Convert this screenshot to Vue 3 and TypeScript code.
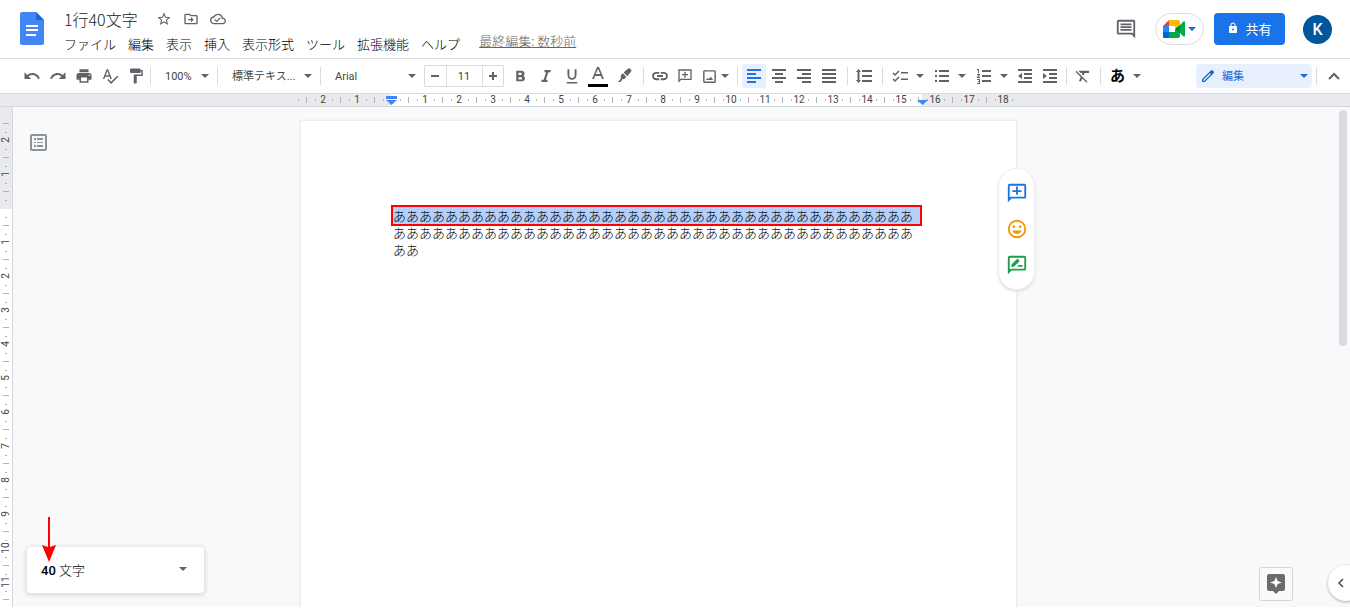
<script setup lang="ts">
import { ref } from 'vue'

interface Mark {
  pos: number
  kind: 'label' | 'tick' | 'dot'
  text: string
}

const CM = 34

function buildMarks(from: number, to: number): Mark[] {
  const marks: Mark[] = []
  for (let q = from; q <= to; q++) {
    const pos = Math.round((q * CM) / 4)
    if (q % 4 === 0) {
      if (q !== 0) marks.push({ pos, kind: 'label', text: String(Math.abs(q / 4)) })
    } else {
      marks.push({ pos, kind: q % 2 === 0 ? 'tick' : 'dot', text: '' })
    }
  }
  return marks
}

const rulerX = buildMarks(-11, 73)
const rulerY = buildMarks(-10, 46)

const menus = ['ファイル', '編集', '表示', '挿入', '表示形式', 'ツール', '拡張機能', 'ヘルプ']
const title = ref('1行40文字')
const fontSize = ref('11')
const row = 'あ'.repeat(40)
const tail = 'ああ'

const alignLines = [
  { name: '左揃え', active: true, d: 'M1 1h14v2H1zM1 5h9v2H1zM1 9h14v2H1zM1 13h9v2H1z' },
  { name: '中央揃え', active: false, d: 'M1 1h14v2H1zM4 5h8v2H4zM1 9h14v2H1zM4 13h8v2H4z' },
  { name: '右揃え', active: false, d: 'M1 1h14v2H1zM6 5h9v2H6zM1 9h14v2H1zM6 13h9v2H6z' },
  { name: '両端揃え', active: false, d: 'M1 1h14v2H1zM1 5h14v2H1zM1 9h14v2H1zM1 13h14v2H1z' },
]
</script>

<template>
  <div class="app">
    <header class="header">
      <a class="logo" href="#" aria-label="ドキュメント ホーム">
        <svg width="24" height="33" viewBox="0 0 24 33">
          <path d="M2 0h14l8 8v23a2 2 0 0 1-2 2H2a2 2 0 0 1-2-2V2a2 2 0 0 1 2-2z" fill="#4285f4" />
          <path d="M16 0l8 8h-8z" fill="#1967d2" />
          <path d="M6 13h12v2H6zM6 17h12v2H6zM6 22h10v2H6z" fill="#fff" />
        </svg>
      </a>
      <div class="heading">
        <div class="title-row">
          <h1 class="title">{{ title }}</h1>
          <button class="mini" aria-label="スター">
            <svg width="16" height="16" viewBox="0 0 24 24"><path d="M22 9.24l-7.19-.62L12 2 9.19 8.63 2 9.24l5.46 4.73L5.82 21 12 17.27 18.18 21l-1.63-7.03L22 9.24zM12 15.4l-3.76 2.27 1-4.28-3.32-2.88 4.38-.38L12 6.1l1.71 4.04 4.38.38-3.32 2.88 1 4.28L12 15.4z" /></svg>
          </button>
          <button class="mini" aria-label="移動">
            <svg width="16" height="16" viewBox="0 0 24 24"><path d="M20 6h-8l-2-2H4c-1.100 0-2 .9-2 2v12c0 1.100.9 2 2 2h16c1.100 0 2-.9 2-2V8c0-1.100-.9-2-2-2zm0 12H4V6h5.200l2 2H20v10zM12 14v3l4-4-4-4v3H8v2z" /></svg>
          </button>
          <button class="mini" aria-label="ドキュメントのステータス">
            <svg width="16" height="16" viewBox="0 0 24 24"><path d="M19.350 10.040A7.490 7.490 0 0 0 12 4C9.110 4 6.600 5.640 5.350 8.040A5.994 5.994 0 0 0 0 14c0 3.310 2.690 6 6 6h13c2.760 0 5-2.240 5-5 0-2.640-2.050-4.780-4.650-4.960zM19 18H6c-2.210 0-4-1.790-4-4 0-2.050 1.530-3.760 3.560-3.970l1.070-.11.5-.95A5.469 5.469 0 0 1 12 6c2.620 0 4.880 1.860 5.390 4.430l.3 1.500 1.530.11A2.980 2.980 0 0 1 22 15c0 1.650-1.350 3-3 3zm-9-3.820l-2.090-2.090L6.500 13.500 10 17l6.010-6.010-1.410-1.410z" /></svg>
          </button>
        </div>
        <nav class="menus">
          <button v-for="m in menus" :key="m" class="menu">{{ m }}</button>
          <a class="last-edit" href="#">最終編集: 数秒前</a>
        </nav>
      </div>
      <div class="actions">
        <button class="comments" aria-label="コメント履歴を開く">
          <svg width="22" height="22" viewBox="0 0 24 24"><path d="M21.990 4c0-1.100-.89-2-1.990-2H4c-1.100 0-2 .9-2 2v12c0 1.100.9 2 2 2h14l4 4-.01-18zM20 4v13.170L18.830 16H4V4h16zM6 12h12v2H6zm0-3h12v2H6zm0-3h12v2H6z" /></svg>
        </button>
        <button class="meet" aria-label="Meet">
          <svg width="22" height="18" viewBox="0 0 22 18">
            <path d="M6 0v6H0z" fill="#ea4335" />
            <path d="M0 6h6v6H0z" fill="#2684fc" />
            <path d="M0 12h6v6H1a1 1 0 0 1-1-1z" fill="#0066da" />
            <path d="M6 0h9a2 2 0 0 1 2 2v7l-5-1V6H6z" fill="#ffba00" />
            <path d="M6 12h6V9h5v7a2 2 0 0 1-2 2H6z" fill="#00ac47" />
            <path d="M17 5l3-3c1-1 2-1 2 1v12c0 2-1 2-2 1l-3-3z" fill="#00ac47" />
            <path d="M12 9l5-4v8z" fill="#00832d" />
          </svg>
          <svg class="caret blue" width="8" height="4" viewBox="0 0 8 4"><path d="M0 0h8L4 4z" /></svg>
        </button>
        <button class="share">
          <svg width="12" height="12" viewBox="0 0 24 24"><path d="M18 8h-1V6c0-2.760-2.240-5-5-5S7 3.240 7 6v2H6c-1.100 0-2 .9-2 2v10c0 1.100.9 2 2 2h12c1.100 0 2-.9 2-2V10c0-1.100-.9-2-2-2zm-6 9a2 2 0 1 1 0-4 2 2 0 0 1 0 4zM9 8V6a3 3 0 0 1 6 0v2z" fill="#fff" /></svg>
          共有
        </button>
        <button class="avatar" aria-label="アカウント K">K</button>
      </div>
    </header>

    <div class="toolbar" role="toolbar" aria-label="ツールバー">
      <div class="group g-history">
        <button class="tb" aria-label="元に戻す"><svg width="18" height="18" viewBox="0 0 24 24"><path d="M12.500 8c-2.650 0-5.050.99-6.900 2.600L2 7v9h9l-3.620-3.620c1.390-1.160 3.160-1.880 5.120-1.880 3.540 0 6.550 2.310 7.600 5.500l2.370-.78C21.080 11.030 17.150 8 12.500 8z" /></svg></button>
        <button class="tb" aria-label="やり直し"><svg width="18" height="18" viewBox="0 0 24 24"><path d="M18.400 10.600C16.550 8.990 14.150 8 11.500 8c-4.650 0-8.580 3.030-9.960 7.220L3.900 16c1.050-3.190 4.050-5.500 7.600-5.500 1.950 0 3.730.72 5.120 1.880L13 16h9V7l-3.600 3.600z" /></svg></button>
        <button class="tb" aria-label="印刷"><svg width="18" height="18" viewBox="0 0 24 24"><path d="M19 8H5c-1.660 0-3 1.340-3 3v6h4v4h12v-4h4v-6c0-1.660-1.340-3-3-3zm-3 11H8v-5h8v5zm3-7c-.55 0-1-.45-1-1s.45-1 1-1 1 .45 1 1-.45 1-1 1zm-1-9H6v4h12V3z" /></svg></button>
        <button class="tb" aria-label="スペルと文法のチェック"><svg width="18" height="18" viewBox="0 0 24 24"><path d="M12.450 16h2.090L9.430 3H7.570L2.460 16h2.090l1.120-3h5.640l1.140 3zm-6.020-5L8.500 5.480 10.570 11H6.430zm15.160.59l-8.090 8.090L9.830 16l-1.410 1.410 5.090 5.090L23 13l-1.410-1.410z" /></svg></button>
        <button class="tb" aria-label="書式の貼り付け"><svg width="18" height="18" viewBox="0 0 24 24"><path d="M18 4V3c0-.55-.45-1-1-1H5c-.55 0-1 .45-1 1v4c0 .55.45 1 1 1h12c.55 0 1-.45 1-1V6h1v4H9v11c0 .55.45 1 1 1h2c.55 0 1-.45 1-1v-9h8V4h-3z" /></svg></button>
      </div>
      <span class="sep"></span>
      <label class="pick w-zoom">
        <select aria-label="ズーム"><option>100%</option><option>90%</option></select>
        <svg class="caret" width="8" height="4" viewBox="0 0 8 4"><path d="M0 0h8L4 4z" /></svg>
      </label>
      <span class="sep"></span>
      <label class="pick w-style">
        <select aria-label="スタイル"><option>標準テキス...</option></select>
        <svg class="caret" width="8" height="4" viewBox="0 0 8 4"><path d="M0 0h8L4 4z" /></svg>
      </label>
      <span class="sep"></span>
      <label class="pick w-font">
        <select aria-label="フォント"><option>Arial</option></select>
        <svg class="caret" width="8" height="4" viewBox="0 0 8 4"><path d="M0 0h8L4 4z" /></svg>
      </label>
      <div class="stepper">
        <button aria-label="フォントサイズを縮小"><svg width="10" height="10" viewBox="0 0 10 10"><path d="M1 4h8v2H1z" /></svg></button>
        <input v-model="fontSize" type="text" aria-label="フォントサイズ" />
        <button aria-label="フォントサイズを拡大"><svg width="10" height="10" viewBox="0 0 10 10"><path d="M1 4h3V1h2v3h3v2H6v3H4V6H1z" /></svg></button>
      </div>
      <div class="group g-text">
        <button class="tb" aria-label="太字"><svg width="18" height="18" viewBox="0 0 24 24"><path d="M16.400 11.790c.97-.67 1.650-1.770 1.650-2.790 0-2.260-1.750-4-4-4H7v14h7.840c2.090 0 3.710-1.700 3.710-3.790 0-1.520-.86-2.820-2.150-3.420zM10 7.500h3a1.500 1.500 0 0 1 0 3h-3v-3zm3.500 9H10v-3h3.500a1.500 1.500 0 0 1 0 3z" /></svg></button>
        <button class="tb" aria-label="斜体"><svg width="18" height="18" viewBox="0 0 24 24"><path d="M10 4v3h2.210l-3.420 10H6v3h8v-3h-2.210l3.420-10H18V4z" /></svg></button>
        <button class="tb" aria-label="下線"><svg width="18" height="18" viewBox="0 0 24 24"><path d="M12 17c3.310 0 6-2.690 6-6V3h-2.500v8a3.500 3.500 0 0 1-7 0V3H6v8c0 3.310 2.690 6 6 6zm-7 3v2h14v-2H5z" /></svg></button>
        <button class="tb color" aria-label="テキストの色"><svg width="20" height="22" viewBox="0 0 20 22"><path d="M9 2h2l5 12h-2l-1-3H7l-1 3H4zM7.600 9h4.800L10 3.900z" /><path d="M0 19h20v3H0z" fill="#000" /></svg></button>
        <button class="tb" aria-label="ハイライトの色"><svg width="16" height="16" viewBox="0 0 16 16"><path d="M11.500 1l1-.6a1.500 1.500 0 0 1 1.500.3l1 1a1.500 1.500 0 0 1 .2 1.800L11.300 8.200 7.600 4.500zM6.800 5.300l3.600 3.600-2.300 2.300-1.500-.2L4.500 14H2l2.800-3.300V7.300z" /></svg></button>
      </div>
      <span class="sep"></span>
      <div class="group tight g-insert">
        <button class="tb" aria-label="リンクを挿入"><svg width="18" height="18" viewBox="0 0 24 24"><path d="M3.900 12c0-1.710 1.390-3.100 3.100-3.100h4V6.500H7a5.500 5.500 0 0 0 0 11h4v-2.400H7A3.100 3.100 0 0 1 3.900 12zM8 13.200h8v-2.400H8v2.400zm9-6.700h-4v2.400h4a3.100 3.100 0 0 1 0 6.200h-4v2.400h4a5.500 5.500 0 0 0 0-11z" /></svg></button>
        <button class="tb" aria-label="コメントを追加"><svg width="16" height="16" viewBox="0 0 24 24"><path d="M22 2H2v20l4-4h16V2zm-2 14H5.200L4 17.200V4h16v12zM11 14.500h2v-3.500h3.500V9H13V5.500h-2V9H7.500v2H11z" /></svg></button>
        <button class="tb split" aria-label="画像を挿入"><svg width="17" height="17" viewBox="0 0 24 24"><path d="M19 5v14H5V5h14m0-2H5c-1.100 0-2 .9-2 2v14c0 1.100.9 2 2 2h14c1.100 0 2-.9 2-2V5c0-1.100-.9-2-2-2zM7 17l2.500-3 1.500 1.500 3-3 3 4.500z" /></svg><svg class="caret" width="8" height="4" viewBox="0 0 8 4"><path d="M0 0h8L4 4z" /></svg></button>
      </div>
      <span class="sep"></span>
      <div class="group tight g-align">
        <button v-for="a in alignLines" :key="a.name" class="tb" :class="{ active: a.active }" :aria-label="a.name" :aria-pressed="a.active"><svg width="16" height="16" viewBox="0 0 16 16"><path :d="a.d" /></svg></button>
      </div>
      <span class="sep"></span>
      <div class="group g-spacing">
        <button class="tb" aria-label="行間隔"><svg width="18" height="18" viewBox="0 0 18 18"><path d="M7 3h10v2H7zM7 8h10v2H7zM7 13h10v2H7zM3.500 2L6 5H4.500v8H6l-2.500 3L1 13h1.500V5H1z" /></svg></button>
      </div>
      <span class="sep"></span>
      <div class="group tight g-lists">
        <button class="tb wide" aria-label="チェックリスト"><svg width="16" height="16" viewBox="0 0 16 16"><path d="M9 4h7v1.500H9zM9 10.500h7V12H9z" /><path d="M1 5l2 2 4-4M1 11l2 2 4-4" fill="none" stroke="#5f6368" stroke-width="1.500" /></svg><svg class="caret" width="8" height="4" viewBox="0 0 8 4"><path d="M0 0h8L4 4z" /></svg></button>
        <button class="tb wide" aria-label="箇条書き"><svg width="16" height="16" viewBox="0 0 16 16"><path d="M5 2h10v2H5zM5 7h10v2H5zM5 12h10v2H5zM1 2h2v2H1zM1 7h2v2H1zM1 12h2v2H1z" /></svg><svg class="caret" width="8" height="4" viewBox="0 0 8 4"><path d="M0 0h8L4 4z" /></svg></button>
        <button class="tb wide" aria-label="番号付きリスト"><svg width="16" height="16" viewBox="0 0 16 16"><path d="M6 2h9v2H6zM6 7h9v2H6zM6 12h9v2H6zM1 1h2v4H2V2H1zM1 6h3v1L2.500 9H4v1H1V9l1.500-2H1zM1 11h3v5H1v-1h2v-1H2v-1h1v-1H1z" /></svg><svg class="caret" width="8" height="4" viewBox="0 0 8 4"><path d="M0 0h8L4 4z" /></svg></button>
        <button class="tb" aria-label="インデント減"><svg width="16" height="16" viewBox="0 0 16 16"><path d="M1 1h14v2H1zM7 5h8v2H7zM7 9h8v2H7zM1 13h14v2H1zM5 5v6L1 8z" /></svg></button>
        <button class="tb" aria-label="インデント増"><svg width="16" height="16" viewBox="0 0 16 16"><path d="M1 1h14v2H1zM7 5h8v2H7zM7 9h8v2H7zM1 13h14v2H1zM1 5v6l4-3z" /></svg></button>
      </div>
      <span class="sep"></span>
      <div class="group g-clear">
        <button class="tb" aria-label="書式をクリア"><svg width="18" height="18" viewBox="0 0 24 24"><path d="M3.270 5L2 6.270l6.970 6.970L6.500 19h3l1.570-3.660L16.730 21 18 19.730 3.550 5.270 3.270 5zM6 5v.18L8.820 8h2.400l-.72 1.680 2.100 2.100L14.210 8H20V5H6z" /></svg></button>
      </div>
      <span class="sep"></span>
      <div class="group g-ime">
        <button class="tb wide ime" aria-label="入力ツール">あ<svg class="caret" width="8" height="4" viewBox="0 0 8 4"><path d="M0 0h8L4 4z" /></svg></button>
      </div>
      <label class="mode pick">
        <svg class="pencil" width="16" height="16" viewBox="0 0 24 24"><path d="M20.410 4.940l-1.350-1.350a2 2 0 0 0-2.830 0L3 16.820V21h4.180L20.410 7.770a2 2 0 0 0 0-2.830zM6.410 19.060L5 19v-1.360l9.820-9.820 1.410 1.410-9.820 9.830z" /></svg>
        <select aria-label="モード"><option>編集</option><option>閲覧</option></select>
        <svg class="caret blue" width="8" height="4" viewBox="0 0 8 4"><path d="M0 0h8L4 4z" /></svg>
      </label>
      <span class="sep"></span>
      <button class="tb collapse" aria-label="メニューを非表示"><svg width="12" height="8" viewBox="0 0 12 8"><path d="M1 7l5-5 5 5" fill="none" stroke="#5f6368" stroke-width="2" /></svg></button>
    </div>

    <div class="ruler-x">
      <svg class="ruler-scale" width="715" height="12" viewBox="-90 0 715 12">
        <path d="M0 0h531v12H0z" fill="#fff" />
        <template v-for="m in rulerX" :key="m.pos">
          <text v-if="m.kind === 'label'" :x="m.pos" y="9">{{ m.text }}</text>
          <rect v-else :x="m.pos" :y="m.kind === 'tick' ? 3 : 5" width="1" :height="m.kind === 'tick' ? 6 : 2" />
        </template>
        <path d="M-5 2H6v3H-5zM-5 6H6L0.500 11zM526 6h11l-5.500 5z" fill="#4285f4" />
      </svg>
    </div>

    <main class="workspace">
      <svg class="ruler-y" width="12" height="100%">
        <path d="M0 0h12v102H0z" fill="#e8eaed" />
        <g transform="translate(0 101)">
          <template v-for="m in rulerY" :key="m.pos">
            <text v-if="m.kind === 'label'" :transform="`translate(9 ${m.pos}) rotate(-90)`">{{ m.text }}</text>
            <rect v-else :x="m.kind === 'tick' ? 3 : 5" :y="m.pos" :width="m.kind === 'tick' ? 6 : 2" height="1" />
          </template>
        </g>
      </svg>

      <div class="canvas">
        <article class="page">
          <p class="line selected">{{ row }}</p>
          <p class="line">{{ row }}</p>
          <p class="line">{{ tail }}</p>
          <aside class="side">
            <button aria-label="コメントを追加"><svg width="22" height="22" viewBox="0 0 24 24"><path d="M22 4a2 2 0 0 0-2-2H4a2 2 0 0 0-2 2v18l4-4h14a2 2 0 0 0 2-2zM20 16H5l-1 1V4h16zM11 14h2v-3h4V9h-4V5h-2v4H7v2h4z" fill="#1a73e8" /></svg></button>
            <button aria-label="絵文字リアクションを追加"><svg width="22" height="22" viewBox="0 0 24 24"><circle cx="12" cy="12" r="9" fill="none" stroke="#f29900" stroke-width="2" /><circle cx="8.500" cy="9.500" r="1.500" fill="#f29900" /><circle cx="15.500" cy="9.500" r="1.500" fill="#f29900" /><path d="M7 13.500h10a5.200 5.200 0 0 1-10 0z" fill="#f29900" /></svg></button>
            <button aria-label="編集を提案"><svg width="22" height="22" viewBox="0 0 24 24"><path d="M22 4a2 2 0 0 0-2-2H4a2 2 0 0 0-2 2v18l4-4h14a2 2 0 0 0 2-2zM20 16H5l-1 1V4h16zM6 14v-2.500l6.500-6.500L15 7.500 8.500 14zM12 14l2-2h4v2z" fill="#1e9b4b" /></svg></button>
          </aside>
        </article>
      </div>

      <button class="outline" aria-label="ドキュメントの概要を表示">
        <svg width="17" height="17" viewBox="0 0 17 17"><rect x="1" y="1" width="15" height="15" rx="1" fill="none" stroke="#909396" stroke-width="2" /><path d="M4 4h2v2H4zM7 4h6v2H7zM4 8h2v1H4zM7 8h6v1H7zM4 11h2v2H4zM7 11h6v2H7z" fill="#909396" /></svg>
      </button>
      <div class="scrollbar"></div>

      <button class="word-count">
        <span><b>40</b> 文字</span>
        <svg class="caret" width="8" height="4" viewBox="0 0 8 4"><path d="M0 0h8L4 4z" /></svg>
      </button>
      <svg class="arrow" width="14" height="45" viewBox="0 0 14 45"><path d="M6 0h2v30l6-2-7 17L0 28l6 2z" fill="#f00" /></svg>

      <button class="explore" aria-label="データ探索"><svg width="18" height="20" viewBox="0 0 18 20"><path d="M2 0h14a2 2 0 0 1 2 2v13a2 2 0 0 1-2 2h-4l-3 3-3-3H2a2 2 0 0 1-2-2V2a2 2 0 0 1 2-2z" fill="#6b6b6b" /><path d="M9 3l1.600 4L15 8.500 10.600 10 9 14l-1.600-4L3 8.500 7.400 7z" fill="#fff" /></svg></button>
      <button class="panel-toggle" aria-label="サイドパネルを表示"><svg width="6" height="10" viewBox="0 0 6 10"><path d="M5 1L1 5l4 4" fill="none" stroke="#444746" stroke-width="1.500" /></svg></button>
    </main>
  </div>
</template>

<style>
body {
  margin: 0;
}
</style>

<style scoped>
.app {
  display: flex;
  flex-direction: column;
  height: 100vh;
  min-width: 0;
  overflow: hidden;
  background: #fff;
  color: #202124;
  font-family: Roboto, "Noto Sans CJK JP", sans-serif;
  font-size: 13px;
  box-sizing: border-box;
  border-bottom: 1px solid #fff;
}
button,
select,
input {
  font: inherit;
  color: inherit;
  background: none;
  border: 0;
  padding: 0;
  margin: 0;
  box-sizing: border-box;
}
svg {
  display: block;
  flex: none;
  fill: #5f6368;
}
.caret.blue {
  fill: #1967d2;
}

.header {
  flex: none;
  display: flex;
  height: 58px;
  border-bottom: 1px solid #dadce0;
  font-family: "Noto Sans CJK JP", sans-serif;
  font-weight: 300;
}
.logo {
  padding: 12px 14px 0 20px;
}
.heading {
  flex: 1;
  min-width: 0;
  padding-top: 7px;
}
.title-row {
  display: flex;
  align-items: center;
  height: 24px;
  padding-left: 6px;
  gap: 11px;
}
.title {
  margin: 0 7px 0 0;
  font-size: 16px;
  line-height: 24px;
  font-weight: 300;
}
.menus {
  display: flex;
  align-items: center;
  height: 26px;
  line-height: 20px;
}
.menu {
  padding: 0 6px;
  color: #000;
  white-space: nowrap;
}
.last-edit {
  margin-left: 13px;
  padding-bottom: 6px;
  color: #666;
  white-space: nowrap;
}
.actions {
  display: flex;
  align-items: center;
  padding: 0 18px 0 0;
}
.comments {
  margin-right: 18px;
}
.meet {
  display: flex;
  align-items: center;
  gap: 3px;
  height: 32px;
  padding: 0 7px;
  margin-right: 10px;
  border: 1px solid #dadce0;
  border-radius: 16px;
}
.share {
  display: flex;
  align-items: center;
  justify-content: center;
  gap: 6px;
  width: 71px;
  height: 32px;
  padding-bottom: 2px;
  margin-right: 18px;
  border-radius: 4px;
  background: #1a73e8;
  color: #fff;
  font-weight: 400;
}
.avatar {
  width: 29px;
  height: 29px;
  border-radius: 50%;
  background: #01579b;
  color: #fff;
  font-family: Roboto, sans-serif;
  font-size: 16px;
  font-weight: 500;
}

.toolbar {
  flex: none;
  display: flex;
  align-items: center;
  height: 34px;
  border-bottom: 1px solid #dadce0;
  color: #444746;
  font-size: 11px;
}
.group {
  flex: none;
  display: flex;
  gap: 2px;
  box-sizing: border-box;
  padding-left: 4px;
}
.group.tight {
  gap: 1px;
}
.g-history {
  width: 150px;
  padding-left: 20px;
}
.g-text {
  width: 139px;
}
.g-insert {
  width: 93px;
}
.g-align {
  width: 109px;
}
.g-spacing {
  width: 34px;
}
.g-lists {
  width: 183px;
}
.g-clear {
  width: 33px;
}
.tb {
  flex: none;
  display: flex;
  align-items: center;
  justify-content: center;
  width: 24px;
  height: 24px;
  border-radius: 2px;
}
.tb.active {
  background: #e8f0fe;
}
.tb.active svg {
  fill: #1a73e8;
}
.tb.split {
  width: 33px;
  gap: 3px;
}
.tb.wide {
  width: 41px;
  gap: 8px;
}
.tb.ime {
  color: #000;
  font-size: 15px;
  line-height: 20px;
  font-weight: 700;
}
.sep {
  flex: none;
  width: 1px;
  height: 18px;
  background: #dadce0;
}
.pick {
  flex: none;
  display: grid;
  align-items: center;
  height: 24px;
}
.pick > * {
  grid-area: 1 / 1;
}
.pick select {
  appearance: none;
  width: 100%;
  height: 24px;
  padding-left: 14px;
}
.pick .caret {
  justify-self: end;
  margin-right: 8px;
  pointer-events: none;
}
.w-zoom {
  width: 66px;
}
.w-style {
  width: 102px;
}
.w-font {
  width: 103px;
}
.stepper {
  flex: none;
  display: flex;
  box-sizing: border-box;
  width: 80px;
  height: 22px;
  border: 1px solid #dadce0;
  border-radius: 1px;
}
.stepper button {
  flex: 1;
  display: flex;
  align-items: center;
  justify-content: center;
}
.stepper input {
  width: 37px;
  border: solid #dadce0;
  border-width: 0 1px;
  text-align: center;
}
.mode {
  width: 116px;
  margin: 0 4px 0 auto;
  border-radius: 4px;
  background: #e8f0fe;
  color: #1967d2;
}
.mode select {
  padding-left: 26px;
}
.mode .caret {
  margin-right: 4px;
}
.mode .pencil {
  margin-left: 4px;
  fill: #1967d2;
}
.collapse {
  margin: 0 4px 0 5px;
}

.ruler-x {
  flex: none;
  display: flex;
  justify-content: center;
  height: 12px;
  padding-right: 33px;
  background: #e8eaed;
  border-bottom: 1px solid #d5d7da;
}
.ruler-scale,
.ruler-y {
  overflow: visible;
  fill: #b0b3b8;
  font-family: Roboto, sans-serif;
  font-size: 10px;
}
.ruler-scale text,
.ruler-y text {
  fill: #444;
  text-anchor: middle;
}

.workspace {
  position: relative;
  flex: 1;
  min-height: 0;
  display: flex;
  overflow: hidden;
  background: #f8f9fa;
}
.ruler-y {
  overflow: hidden;
  background: #fff;
  border-right: 1px solid #d5d7da;
}
.canvas {
  flex: 1;
  display: flex;
  justify-content: center;
  padding: 14px 46px 0 0;
}
.page {
  position: relative;
  box-sizing: border-box;
  width: 715px;
  padding: 86px 96px 0 92px;
  background: #fff;
  box-shadow: 0 0 2px 1px #e6e8ea;
  color: #000;
  font-family: "Noto Sans CJK JP", sans-serif;
  font-weight: 300;
}
.line {
  margin: 0;
  font-size: 13px;
  line-height: 17px;
  white-space: nowrap;
}
.line.selected {
  outline: 2px solid #f00;
  background: #b4cffa;
}
.side {
  position: absolute;
  top: 47px;
  right: -19px;
  display: flex;
  flex-direction: column;
  align-items: center;
  gap: 14px;
  box-sizing: border-box;
  width: 37px;
  padding: 13px 0;
  border: 1px solid #eceef0;
  border-radius: 19px;
  background: #fff;
  box-shadow: 0 2px 3px #dfe1e5;
}
.outline {
  position: absolute;
  left: 30px;
  top: 27px;
}
.scrollbar {
  position: absolute;
  top: 3px;
  right: 3px;
  width: 8px;
  height: 236px;
  border-radius: 4px;
  background: #dadce0;
}
.word-count {
  position: absolute;
  left: 27px;
  bottom: 14px;
  display: flex;
  align-items: center;
  justify-content: space-between;
  width: 177px;
  height: 46px;
  padding: 0 17px 2px 14px;
  border-radius: 4px;
  background: #fff;
  box-shadow: 0 1px 5px 1px #d4d6d9;
  color: #000;
  font-weight: 300;
}
.word-count b {
  font-weight: 500;
}
.arrow {
  position: absolute;
  left: 42px;
  bottom: 45px;
}
.explore {
  position: absolute;
  right: 57px;
  bottom: 6px;
  display: flex;
  align-items: center;
  justify-content: center;
  width: 34px;
  height: 34px;
  border: 1px solid #d6d6d6;
  border-radius: 3px;
  background: #fafafa;
}
.panel-toggle {
  position: absolute;
  right: -14px;
  bottom: 6px;
  display: flex;
  align-items: center;
  width: 36px;
  height: 36px;
  padding-left: 10px;
  border-radius: 50%;
  background: #fff;
  box-shadow: 0 1px 3px #a8abaf;
}
</style>
